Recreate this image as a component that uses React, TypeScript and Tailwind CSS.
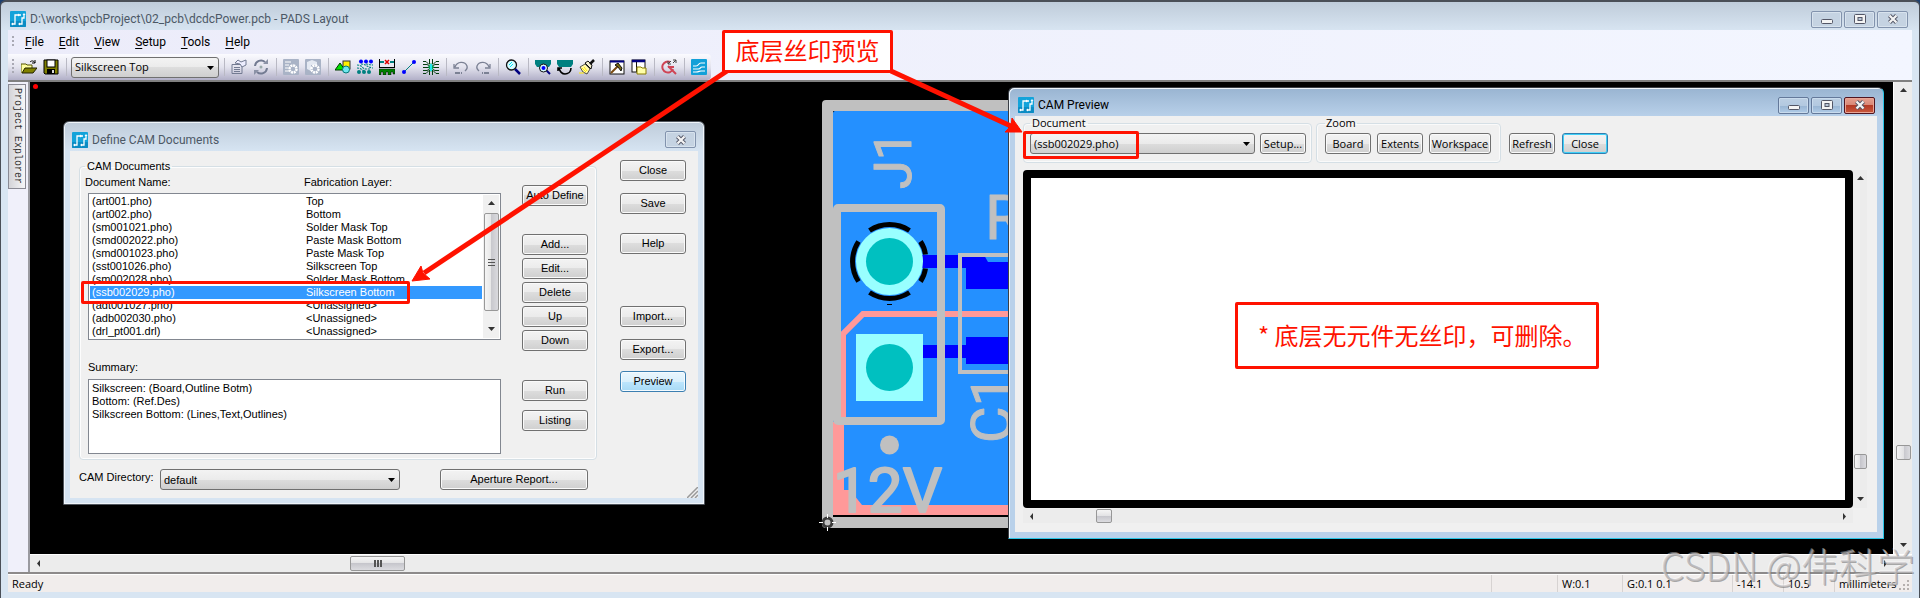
import type { ReactNode } from 'react';
import clsx from 'clsx';

interface CamDocument {
  name: string;
  layer: string;
}

const menus = ['File', 'Edit', 'View', 'Setup', 'Tools', 'Help'];

const documents: CamDocument[] = [
  { name: '(art001.pho)', layer: 'Top' },
  { name: '(art002.pho)', layer: 'Bottom' },
  { name: '(sm001021.pho)', layer: 'Solder Mask Top' },
  { name: '(smd002022.pho)', layer: 'Paste Mask Bottom' },
  { name: '(smd001023.pho)', layer: 'Paste Mask Top' },
  { name: '(sst001026.pho)', layer: 'Silkscreen Top' },
  { name: '(sm002028.pho)', layer: 'Solder Mask Bottom' },
  { name: '(ssb002029.pho)', layer: 'Silkscreen Bottom' },
  { name: '(adt001027.pho)', layer: '<Unassigned>' },
  { name: '(adb002030.pho)', layer: '<Unassigned>' },
  { name: '(drl_pt001.drl)', layer: '<Unassigned>' },
];

const selectedDocument = '(ssb002029.pho)';

const summary = `Silkscreen: (Board,Outline Botm)
Bottom: (Ref.Des)
Silkscreen Bottom: (Lines,Text,Outlines)`;

function Logo() {
  return (
    <svg viewBox="0 0 16 16" className="size-4 shrink-0">
      <rect width="16" height="16" rx="1" fill="#13a3da" />
      <rect y="10" width="16" height="6" rx="1" fill="#0b8cc4" />
      <path d="M2 13h3V4h4M9 13h3V7h2V4" fill="none" stroke="#fff" strokeWidth="1.3" />
      <path d="M1 13l2-1.500v3zM10 4L8 2.500v3zM8 13l2-1.500v3zM14 2l-1.500 2h3z" fill="#fff" />
      <circle cx="10" cy="4" r="1" fill="#fff" />
    </svg>
  );
}

function Button({ children, className, variant = 'normal' }: { children: ReactNode; className?: string; variant?: 'normal' | 'hot' | 'default' }) {
  return (
    <button
      type="button"
      className={clsx(
        'h-[21px] shrink-0 whitespace-nowrap rounded-[3px] border text-center leading-[17px] text-black',
        variant === 'normal' && 'border-[#707070] bg-[linear-gradient(#f3f3f3,#ebebeb_50%,#dddddd_50%,#cfcfcf)] shadow-[inset_0_0_0_1px_#fafafa]',
        variant === 'hot' && 'border-[#3c7fb1] bg-[linear-gradient(#eaf6fd,#d9f0fc_50%,#bee6fd_50%,#a7d9f5)] shadow-[inset_0_0_0_1px_#f4fbff]',
        variant === 'default' && 'border-[#2f7fb0] bg-[linear-gradient(#f3f3f3,#ebebeb_50%,#dddddd_50%,#cfcfcf)] shadow-[inset_0_0_0_1px_#3fd0f8]',
        className,
      )}
    >
      {children}
    </button>
  );
}

function Select({ id, value, className, label }: { id: string; value: string; className?: string; label?: string }) {
  return (
    <div className={clsx('relative h-[21px] shrink-0', className)}>
      <select
        id={id}
        aria-label={label}
        defaultValue={value}
        className="block h-full w-full appearance-none rounded-[3px] border border-[#707070] bg-[linear-gradient(#f3f3f3,#ebebeb_50%,#dddddd_50%,#cfcfcf)] pl-[3px] leading-[18px] text-black"
      >
        <option>{value}</option>
      </select>
      <svg viewBox="0 0 7 4" className="pointer-events-none absolute right-[5px] top-[9px] h-1 w-[7px]">
        <path d="M0 0h7L3.5 4z" fill="#000" />
      </svg>
    </div>
  );
}

function CaptionButton({ kind, tone }: { kind: 'min' | 'max' | 'close'; tone: 'idle' | 'active' | 'red' }) {
  const labels = { min: 'Minimize', max: 'Maximize', close: 'Close window' };
  return (
    <button
      type="button"
      aria-label={labels[kind]}
      className={clsx(
        'flex h-[17px] w-[31px] items-center justify-center rounded-[2px] border',
        tone === 'idle' && 'border-[#8293ad] bg-[#c5d3e2] shadow-[inset_0_0_0_1px_#d8e3ee]',
        tone === 'active' && 'border-[#64799a] bg-[linear-gradient(#bccfe3,#b3c9e0_50%,#98b4d2_50%,#b0cce8)] shadow-[inset_0_0_0_1px_#c9dbed]',
        tone === 'red' && 'border-[#501520] bg-[linear-gradient(#e5a090,#d98877_45%,#b43a25_50%,#c9583d)] shadow-[inset_0_0_0_1px_#e8a596]',
      )}
    >
      <svg viewBox="0 0 12 10" className="h-[10px] w-3">
        {kind === 'min' && <rect x="0.5" y="5.5" width="11" height="4" rx="1" fill="#f4f4f4" stroke="#535666" />}
        {kind === 'max' && (
          <>
            <rect x="0.5" y="0.5" width="11" height="9" rx="1" fill="#f4f4f4" stroke="#535666" />
            <rect x="4" y="3.5" width="4" height="3" fill="#b9c7d8" stroke="#535666" />
          </>
        )}
        {kind === 'close' && (
          <>
            <path d="M2.5 1.5l7 7M9.5 1.5l-7 7" stroke="#535666" strokeWidth="4.2" />
            <path d="M2.5 1.5l7 7M9.5 1.5l-7 7" stroke="#f4f4f4" strokeWidth="2.3" />
          </>
        )}
      </svg>
    </button>
  );
}

function Arrow({ dir }: { dir: 'up' | 'down' | 'left' | 'right' }) {
  const paths = {
    up: 'M1 6l3.500-4L8 6z',
    down: 'M1 2l3.500 4L8 2z',
    left: 'M6 1L3 4.500 6 8z',
    right: 'M3 1l3 3.500L3 8z',
  };
  return (
    <svg viewBox="0 0 9 9" className="size-[9px] shrink-0">
      <path d={paths[dir]} fill="#333" />
    </svg>
  );
}

function Separator() {
  return (
    <div className="flex w-2 shrink-0 justify-center">
      <div className="h-[18px] w-px bg-[#b9b9c4]" />
    </div>
  );
}

function Tool({ label, children }: { label: string; children: ReactNode }) {
  return (
    <button type="button" aria-label={label} className="flex h-[22px] w-[22px] shrink-0 items-center justify-center">
      <svg viewBox="0 0 16 16" className="size-4">{children}</svg>
    </button>
  );
}

function Toolbar() {
  return (
    <div className="flex h-[26px] w-[703px] items-center rounded-r bg-[linear-gradient(#fbfbff,#e3e3ee_50%,#b2b0c8)] pl-1">
      <div className="mr-1 h-4 w-[2px] bg-[repeating-linear-gradient(#a9a9b4_0_2px,transparent_2px_4px)]" />
      <Tool label="Open">
        <path d="M0 14V5h5l1 1h5v3" fill="#ffffa0" stroke="#555500" />
        <path d="M1 14l3-5h12l-4 5z" fill="#808000" stroke="#222200" />
        <path d="M9 3c2-2 4-1 5 1M14 1v3h-3" fill="none" stroke="#000" />
      </Tool>
      <Tool label="Save">
        <path d="M1 1h14v14H2l-1-1z" fill="#808000" stroke="#000" />
        <rect x="4" y="1" width="8" height="7" fill="#fff" stroke="#000" />
        <rect x="4" y="10" width="8" height="5" fill="#000" />
        <rect x="9" y="11" width="2" height="3" fill="#ddd" />
      </Tool>
      <Separator />
      <Select id="layer" label="Layer" value="Silkscreen Top" className="mx-px w-[148px] text-[11px]" />
      <Separator />
      <Tool label="Properties">
        <path d="M1 5.500h10v9H1zM3 8.500h6M3 10.500h6M3 12.500h6" fill="none" stroke="#737b92" />
        <path d="M4 4l3-3 3 2 5-2v5l-4 2-2-3z" fill="#eef" stroke="#737b92" />
      </Tool>
      <Tool label="Cycle">
        <path d="M2 7a6 6 0 0 1 10-4M14 9a6 6 0 0 1-10 4" fill="none" stroke="#737b92" strokeWidth="2" />
        <path d="M10 5h5V0zM6 11H1v5z" fill="#8b92a6" />
        <circle cx="8" cy="8" r="1.500" fill="#9aa" />
      </Tool>
      <Separator />
      <Tool label="Document settings">
        <rect width="16" height="16" rx="1" fill="#a9b3c6" />
        <path d="M2 3h6M2 6h4M2 9h3M2 12h4" stroke="#fff" />
        <circle cx="10" cy="10" r="3.500" fill="none" stroke="#fff" strokeWidth="2.500" strokeDasharray="2 0.700" />
      </Tool>
      <Tool label="Database settings">
        <rect width="16" height="16" rx="1" fill="#a9b3c6" />
        <path d="M2 3l5-2 5 2v3H6v6L2 10z" fill="#e4e9f2" />
        <circle cx="10" cy="10" r="3.500" fill="none" stroke="#fff" strokeWidth="2.500" strokeDasharray="2 0.700" />
      </Tool>
      <Separator />
      <Tool label="Drafting">
        <rect x="8" y="2" width="7" height="8" fill="#ffef00" stroke="#333" />
        <path d="M0 11l5-7 5 7z" fill="#00e000" stroke="#003800" />
        <circle cx="11" cy="10.500" r="3.500" fill="#6fe8f0" stroke="#077" />
      </Tool>
      <Tool label="Design">
        <g fill="none" stroke="#008080" strokeWidth="1.200" strokeDasharray="2 1">
          <path d="M0 6c6 0 5 4 9 4h4" />
          <path d="M0 9c4 0 4 2 8 3" />
          <path d="M4 5c5 0 5 3 12 4" />
          <path d="M9 5c3 0 3 1 7 1" />
        </g>
        <g fill="#0000ff">
          <circle cx="4" cy="2.500" r="2" />
          <circle cx="9" cy="2.500" r="2" />
          <circle cx="14" cy="2.500" r="2" />
        </g>
        <g fill="#008080">
          <circle cx="2" cy="13" r="2" />
          <circle cx="7" cy="13" r="2" />
          <circle cx="12" cy="13" r="2" />
        </g>
      </Tool>
      <Tool label="Dimensioning">
        <rect x="1" y="2" width="14" height="6" fill="#e9e9f2" />
        <path d="M0.500 0v8M15.500 0v8M0 8.500h16" stroke="#000" />
        <path d="M1 3h4M11 3h4" stroke="#008080" strokeWidth="2" />
        <path d="M6 1l4 4M10 1L6 5" stroke="#e00000" strokeWidth="1.500" />
        <path d="M0 10h16v5h-2v-2h-2v3H9v-3H7v3H4v-3H2v3H0z" fill="#008000" stroke="#000" strokeWidth="0.500" />
      </Tool>
      <Tool label="Route">
        <path d="M3 13L13 3" stroke="#008080" />
        <circle cx="3" cy="13" r="2" fill="#0000ff" />
        <circle cx="13" cy="3" r="2" fill="#0000ff" />
      </Tool>
      <Tool label="ECO">
        <path d="M0 2.500h3l3 3M0 5.500h4l2 1M0 8.500h6M0 11.500h4l2-1M0 14.500h3l3-3M16 2.500h-3l-3 3M16 5.500h-4l-2 1M16 8.500h-6M16 11.500h-4l-2-1M16 14.500h-3l-3-3M6.500 0v5M9.500 0v5M6.500 16v-5M9.500 16v-5" fill="none" stroke="#053d10" />
        <path d="M8 4l3 4-3 5-3-5z" fill="#00a050" />
        <path d="M8 5v7" stroke="#20e8f0" strokeWidth="2" />
      </Tool>
      <Separator />
      <Tool label="Undo">
        <path d="M2 8c2-6 10-6 12-1 1 3-1 4-2 5M1 5v4h5" fill="none" stroke="#7b8194" strokeWidth="1.300" />
        <path d="M2 14h8" stroke="#7b8194" strokeWidth="2" strokeDasharray="5 1 1 1" />
      </Tool>
      <Tool label="Redo">
        <path d="M14 8c-2-6-10-6-12-1-1 3 1 4 2 5M15 5v4h-5" fill="none" stroke="#7b8194" strokeWidth="1.300" />
        <path d="M14 14H6" stroke="#7b8194" strokeWidth="2" strokeDasharray="5 1 1 1" />
      </Tool>
      <Separator />
      <Tool label="Zoom">
        <path d="M10 10l5 5" stroke="#000080" strokeWidth="2.500" />
        <circle cx="6.500" cy="6" r="5" fill="#d6fbff" stroke="#111" strokeWidth="1.300" />
        <path d="M4 6l3-3M5 8l3-3" stroke="#00e0f0" />
      </Tool>
      <Separator />
      <Tool label="Board view">
        <path d="M0 1h16v4l-2 3H2L0 5z" fill="#008080" />
        <path d="M11 11l4 4" stroke="#000080" strokeWidth="2" />
        <circle cx="8.500" cy="9" r="4" fill="#d8faff" stroke="#111" />
        <circle cx="8.500" cy="9" r="2" fill="#0000ff" />
      </Tool>
      <Tool label="Refresh view">
        <path d="M0 1h16v4l-2 3H2L0 5z" fill="#008080" />
        <path d="M2 9c1 4 3 6 6 6s6-2 6-6M1 12V9h4" fill="none" stroke="#000" strokeWidth="1.600" />
      </Tool>
      <Tool label="Redraw">
        <path d="M1 8l5-3 5 5-3 5-4-2z" fill="#fff7a8" stroke="#111" strokeWidth="0.700" />
        <path d="M6 4l6 6 1-4-4-4z" fill="#f4f0d0" stroke="#111" />
        <path d="M11 5l4-4" stroke="#111" strokeWidth="2.500" />
        <path d="M3 9l4 4M5 8l3 4M0 14h5" stroke="#ffe800" />
      </Tool>
      <Separator />
      <Tool label="Output window">
        <rect x="1" y="2" width="14" height="13" fill="#fff" stroke="#111" />
        <path d="M1 2.500h14" stroke="#000080" strokeWidth="2" />
        <path d="M2 14l7-7" stroke="#7a4a10" strokeWidth="2" />
        <path d="M6 6l3-2 4 5-1 3-3-4z" fill="#7a6a10" stroke="#111" />
      </Tool>
      <Tool label="Project window">
        <rect x="1" y="1" width="13" height="12" fill="#fff" stroke="#111" />
        <path d="M1 2h13" stroke="#000080" strokeWidth="2.500" />
        <path d="M5.500 3v10" stroke="#111" />
        <path d="M6 15V8h4l1 1h4v6z" fill="#ffffa8" stroke="#887a00" />
      </Tool>
      <Separator />
      <Tool label="Quick find">
        <path d="M9 3a5.500 5.500 0 1 0 3 7M7 8h6" fill="none" stroke="#cf4455" strokeWidth="2" />
        <path d="M7 7l8 8" stroke="#cf4455" strokeWidth="2" />
        <path d="M7 5l3-3M12 4l3-3M12 1h3v3M7 2v3h3" fill="none" stroke="#444" />
      </Tool>
      <Separator />
      <Tool label="Router">
        <rect width="16" height="16" rx="1" fill="#12a0d8" />
        <path d="M2 7h3c3 0 2-3 5-3h4M2 10h5c3 0 2-2 4-2h3M2 13h3c3 0 3-1 5-1h4" fill="none" stroke="#fff" strokeWidth="1.200" />
      </Tool>
    </div>
  );
}

/* board artwork in the lower layer of the work area */
function Board() {
  return (
    <svg viewBox="815 95 194 440" className="absolute left-[785px] top-[13px] h-[440px] w-[194px]">
      <rect x="822" y="100" width="200" height="428" rx="4" fill="#c0c0c0" />
      <rect x="833" y="111" width="190" height="406" fill="#000" />
      <rect x="833" y="111" width="190" height="404" rx="2" fill="#2490ff" />
      <path d="M833 422h11v68h6l12 15h160v10H833z" fill="#ff9999" />
      <path d="M1009 314H863l-20 20v88" fill="none" stroke="#ff9999" strokeWidth="6" />
      <path d="M920 255h64l4 7h30v27h-52v-21h-46zM920 345h46v-8h60v27h-60v-6h-46z" fill="#0000ff" />
      <rect x="837" y="208" width="104" height="213" rx="1" fill="none" stroke="#c0c0c0" strokeWidth="8" />
      <path d="M1012 255H960v117h52" fill="none" stroke="#c0c0c0" strokeWidth="4" />

      <g fill="none" stroke="#000" strokeWidth="5">
        <path d="M869.500 230.500a36.500 36.500 0 0 1 40 0" />
        <path d="M869.500 292.500a36.500 36.500 0 0 0 40 0" />
        <path d="M858.500 241.500a36.500 36.500 0 0 0 0 40" />
        <path d="M920.500 241.500q4 6 5 13M920.500 281.500q4-6 5-13" />
      </g>
      <circle cx="889.500" cy="261.500" r="33.500" fill="#99ffff" />
      <circle cx="889.500" cy="261.500" r="23.500" fill="#00c0c0" />
      <rect x="856" y="334" width="67" height="67" fill="#99ffff" />
      <circle cx="889.500" cy="367.500" r="23.500" fill="#00c0c0" />
      <circle cx="889.500" cy="445" r="9.500" fill="#c0c0c0" />
      <path d="M887 304.500h5" stroke="#000" />

      <g fill="#c0c0c0" stroke="#c0c0c0" strokeLinejoin="round" fontFamily="Roboto, 'Liberation Sans', sans-serif">
        <text transform="translate(911 189) rotate(-90)" fontSize="52">J1</text>
        <text x="985" y="239" fontSize="62">R</text>
        <text transform="translate(1011 443) rotate(-90)" fontSize="56">C1</text>
        <text x="833" y="512" fontSize="62" strokeWidth="2">12V</text>
      </g>

      <circle cx="827.500" cy="522.500" r="4.500" fill="#c0c0c0" stroke="#3a3a3a" strokeWidth="3" />
      <path d="M819 522.500h4M832 522.500h4M827.500 514v4M827.500 527v4" stroke="#fff" />
    </svg>
  );
}

function DefineDialog() {
  return (
    <section className="absolute left-[33px] top-[39px] flex w-[642px] flex-col rounded-t-md border border-[#50565e] bg-[linear-gradient(#bfccda,#d6e4f2_29px)] px-[6px] pb-[6px] font-['Liberation_Sans',Arial,sans-serif] text-[11px] leading-[13px] shadow-[inset_0_0_0_1px_#f0f5fa]">
      <header className="flex h-[29px] items-center pl-[2px] pt-[6px] pr-[2px] font-[Roboto,'Open_Sans',sans-serif] text-xs text-[#4c5866]">
        <Logo />
        <h2 className="ml-1 flex-1">Define CAM Documents</h2>
        <CaptionButton kind="close" tone="idle" />
      </header>
      <div className="relative bg-[#f0f0f0] pb-2 pl-[9px] pr-3 pt-[9px] text-black">
        <div className="flex items-start justify-between">
          <fieldset className="flex rounded border border-[#d5dfe5] pb-[5px] pl-[5px] pr-2 shadow-[inset_0_0_0_1px_#fdfdfd]">
            <legend className="px-[2px]">CAM Documents</legend>
            <div className="pt-[3px]">
              <table className="block">
                <thead className="mb-1 block">
                  <tr className="flex text-left">
                    <th className="w-[219px] font-normal">Document Name:</th>
                    <th className="font-normal">Fabrication Layer:</th>
                  </tr>
                </thead>
                <tbody className="relative ml-[3px] block h-[147px] w-[413px] border border-[#828790] bg-white py-px pl-px pr-[18px]">
                  {documents.map((doc) => (
                    <tr
                      key={doc.name}
                      className={clsx('flex pl-[2px]', doc.name === selectedDocument && 'bg-[#3399ff] text-white')}
                    >
                      <td className="w-[214px]">{doc.name}</td>
                      <td>{doc.layer}</td>
                    </tr>
                  ))}
                  <tr className="absolute bottom-px right-px top-px w-4">
                    <td className="flex h-full w-4 flex-col items-center bg-[#f0f0f0] py-1" aria-label="Scroll">
                      <Arrow dir="up" />
                      <div className="mb-auto mt-[5px] flex h-[98px] w-[15px] items-center justify-center rounded-[2px] border border-[#989898] bg-[linear-gradient(90deg,#f5f5f5,#e6e6e6_50%,#c9c9ce_50%,#dadade)]">
                        <div className="h-[7px] w-[7px] bg-[repeating-linear-gradient(#555_0_1px,transparent_1px_3px)]" />
                      </div>
                      <Arrow dir="down" />
                    </td>
                  </tr>
                </tbody>
              </table>
              <label htmlFor="summary" className="ml-[3px] mt-[21px] block">Summary:</label>
              <textarea
                id="summary"
                readOnly
                defaultValue={summary}
                className="ml-[3px] mt-[5px] block h-[75px] w-[413px] resize-none overflow-hidden border border-[#828790] bg-white px-[3px] py-[2px]"
              />
            </div>
            <div className="ml-[21px] mt-3 flex w-[66px] flex-col gap-[3px]">
              <Button>Auto Define</Button>
              <Button className="mt-[25px]">Add...</Button>
              <Button>Edit...</Button>
              <Button>Delete</Button>
              <Button>Up</Button>
              <Button>Down</Button>
              <Button className="mt-[26px]">Run</Button>
              <Button className="mt-[6px]">Listing</Button>
            </div>
          </fieldset>
          <div className="flex w-[66px] flex-col gap-3">
            <Button>Close</Button>
            <Button>Save</Button>
            <Button className="mt-[7px]">Help</Button>
            <Button className="mt-10">Import...</Button>
            <Button>Export...</Button>
            <Button variant="hot" className="-mt-px">Preview</Button>
          </div>
        </div>
        <div className="mt-[9px] flex items-center">
          <label htmlFor="directory" className="w-[81px] pb-1">CAM Directory:</label>
          <Select id="directory" value="default" className="w-60" />
          <Button className="ml-10 w-[148px]">Aperture Report...</Button>
        </div>
        <svg viewBox="0 0 11 11" className="absolute bottom-0 right-0 size-[11px]">
          <path d="M0 11L11 0M4 11l7-7M8 11l3-3" stroke="#999" strokeWidth="1.500" />
        </svg>
      </div>
    </section>
  );
}

function PreviewWindow() {
  return (
    <section className="absolute left-[978px] top-[5px] flex w-[876px] flex-col rounded-t-md border border-b-[#29c5e6] border-l-[#3b3f46] border-r-[#29c5e6] border-t-[#3b3f46] bg-[linear-gradient(#99b4d1,#b9d1ea_29px)] px-[6px] pb-[6px] font-['Open_Sans','Noto_Sans',sans-serif] text-[11px] leading-[14px] text-black shadow-[inset_1px_1px_0_#eef5fb]">
      <header className="flex h-7 items-center gap-[2px] pl-[3px] pr-[2px] pt-[6px] font-[Roboto,'Open_Sans',sans-serif] text-xs">
        <Logo />
        <h2 className="ml-[2px] flex-1">CAM Preview</h2>
        <CaptionButton kind="min" tone="active" />
        <CaptionButton kind="max" tone="active" />
        <CaptionButton kind="close" tone="red" />
      </header>
      <div className="bg-[#f0f0f0] pb-[9px] pl-2 pr-[10px]">
        <div className="flex items-start">
          <fieldset className="flex w-[289px] rounded border border-[#d5dfe5] pb-2 pl-[6px] pt-[3px] shadow-[inset_0_0_0_1px_#fafafa]">
            <legend className="px-[2px]">Document</legend>
            <Select id="document" label="Document" value={selectedDocument} className="w-[225px]" />
            <Button className="ml-[5px] w-[46px]">Setup...</Button>
          </fieldset>
          <fieldset className="ml-1 flex w-[185px] gap-[6px] rounded border border-[#d5dfe5] pb-2 pl-[8px] pt-[3px] shadow-[inset_0_0_0_1px_#fafafa]">
            <legend className="px-px">Zoom</legend>
            <Button className="w-[46px]">Board</Button>
            <Button className="w-[46px]">Extents</Button>
            <Button className="w-[62px]">Workspace</Button>
          </fieldset>
          <div className="ml-2 flex gap-[7px] pt-[17px]">
            <Button className="w-[46px]">Refresh</Button>
            <Button variant="default" className="w-[46px]">Close</Button>
          </div>
        </div>
        <div className="mt-[7px] flex">
          <div className="h-[338px] flex-1 rounded border-8 border-black bg-white" />
          <div className="flex w-[14px] flex-col items-center bg-[#ececec] py-1">
            <Arrow dir="up" />
            <div className="mb-[26px] mt-auto h-[15px] w-[13px] rounded-[2px] border border-[#979797] bg-[linear-gradient(90deg,#f5f5f5,#e2e2e4_50%,#c6c6cc_50%,#dcdce0)]" />
            <Arrow dir="down" />
          </div>
        </div>
        <div className="mr-[14px] mt-px flex h-[14px] items-center bg-[#ececec] px-1">
          <Arrow dir="left" />
          <div className="ml-[60px] mr-auto h-[14px] w-4 rounded-[2px] border border-[#979797] bg-[linear-gradient(#f5f5f5,#e2e2e4_50%,#c6c6cc_50%,#dcdce0)]" />
          <Arrow dir="right" />
        </div>
      </div>
    </section>
  );
}

function StatusBar() {
  return (
    <footer className="flex h-[18px] items-center border-t border-white bg-[#f1edec] pl-1 text-[11px] leading-[17px] text-black">
      <span className="flex-1">Ready</span>
      <span className="h-full w-[66px] border-l border-[#d7d3d2]" />
      <span className="w-[65px] border-l border-[#d7d3d2] pl-1">W:0.1</span>
      <span className="w-[110px] border-l border-[#d7d3d2] pl-1">G:0.1 0.1</span>
      <span className="w-[51px] border-l border-[#d7d3d2] pl-1">-14.1</span>
      <span className="w-[51px] border-l border-[#d7d3d2] pl-1">10.5</span>
      <span className="w-[62px] border-l border-[#d7d3d2] pl-1">millimeters</span>
      <svg viewBox="0 0 16 16" className="size-4">
        <path d="M11 5h2M7 9h2M11 9h2M3 13h2M7 13h2M11 13h2" stroke="#b5b0ae" strokeWidth="2" />
      </svg>
    </footer>
  );
}

function Annotations() {
  return (
    <div className="pointer-events-none absolute inset-0 font-['Noto_Sans_CJK_SC',sans-serif] text-2xl text-[#ff1200]">
      <svg viewBox="0 0 1920 598" className="absolute left-0 top-0 h-[598px] w-[1920px]">
        <g fill="#ff1200" stroke="#ff1200">
          <path d="M727 71L424 273" strokeWidth="5" />
          <path d="M412 281l9-15 2 7 7 6z" />
          <path d="M891 71l122 56" strokeWidth="5" />
          <path d="M1022 132l-10-14-1 8-6 6z" />
        </g>
      </svg>
      <div className="absolute left-[722px] top-[30px] flex h-[43px] w-[171px] items-center justify-center rounded-[2px] border-[3px] border-[#ff1200] bg-white pb-1 leading-8">
        底层丝印预览
      </div>
      <div className="absolute left-[81px] top-[281px] h-[23px] w-[329px] rounded-[2px] border-[3px] border-[#ff1200]" />
      <div className="absolute left-[1023px] top-[131px] h-[28px] w-[116px] rounded-[2px] border-[3px] border-[#ff1200]" />
      <div className="absolute left-[1235px] top-[302px] flex h-[67px] w-[364px] items-center whitespace-nowrap rounded-[2px] border-[3px] border-[#ff1200] bg-white pb-[2px] pl-5 leading-8">
        * 底层无元件无丝印，可删除。
      </div>
      <div className="absolute bottom-[13px] right-[5px] whitespace-nowrap text-[38px] font-light leading-10 text-[#c4c1c3]/70 [text-shadow:1px_1px_0_#77777799,-1px_-1px_0_#ffffff66]">
        CSDN @伟科学
      </div>
    </div>
  );
}

export default function App() {
  return (
    <div className="relative overflow-hidden bg-[#1d3f6e]">
      <main className="flex min-h-screen flex-col overflow-hidden rounded-t-md border-x border-t-2 border-[#4a4f57] bg-[linear-gradient(#bfccda,#d8e5f2_29px)] px-[7px] pb-[6px] font-['Open_Sans','Noto_Sans',sans-serif] text-xs text-black">
        <header className="flex h-7 items-center gap-[2px] pl-[2px] pr-1 pt-[6px] font-[Roboto,'Open_Sans',sans-serif] text-[#4c5866]">
          <Logo />
          <h1 className="ml-[2px] flex-1">D:\works\pcbProject\02_pcb\dcdcPower.pcb - PADS Layout</h1>
          <CaptionButton kind="min" tone="idle" />
          <CaptionButton kind="max" tone="idle" />
          <CaptionButton kind="close" tone="idle" />
        </header>

        <div className="bg-[linear-gradient(90deg,#ececfa,#f3f6ff)]">
          <nav className="flex h-6 items-center gap-[15px] pl-1 font-[Roboto,'Open_Sans',sans-serif]">
            <div className="-mr-1 h-3 w-[2px] bg-[repeating-linear-gradient(#a9a9b4_0_2px,transparent_2px_4px)]" />
            {menus.map((menu) => (
              <button key={menu} type="button">
                <span className="underline underline-offset-2">{menu[0]}</span>
                {menu.slice(1)}
              </button>
            ))}
          </nav>
          <Toolbar />
        </div>

        <div className="flex flex-1 border-t-2 border-[#808080]">
          <aside className="w-[22px] border-r-2 border-[#9a9aa0] bg-[#f0f0fa] pt-[2px]">
            <button
              type="button"
              className="h-[105px] w-[18px] border border-[#8a8a94] bg-[linear-gradient(90deg,#d4d4d8,#f6f6f8)] font-['Liberation_Mono',monospace] text-[10px] leading-4 text-[#333] [writing-mode:vertical-rl]"
            >
              Project Explorer
            </button>
          </aside>
          <div className="flex flex-1 flex-col">
            <div className="flex flex-1">
              <div className="relative flex-1 bg-black">
                <span className="absolute left-[3px] top-[2px] size-[5px] rounded-full bg-[#ff0000]" />
                <Board />
                <DefineDialog />
                <PreviewWindow />
              </div>
              <div className="flex w-[19px] flex-col items-center border-l border-white bg-[#ececec] py-1">
                <Arrow dir="up" />
                <div className="mb-[81px] mt-auto h-[15px] w-[15px] rounded-[2px] border border-[#979797] bg-[linear-gradient(90deg,#f5f5f5,#e2e2e4_50%,#c6c6cc_50%,#dcdce0)]" />
                <Arrow dir="down" />
              </div>
            </div>
            <div className="flex h-[18px] items-center border-t border-white bg-[#ececec] pl-1 pr-[22px]">
              <Arrow dir="left" />
              <div className="ml-[307px] mr-auto flex h-[15px] w-[55px] items-center justify-center rounded-[2px] border border-[#979797] bg-[linear-gradient(#f5f5f5,#e2e2e4_50%,#c6c6cc_50%,#dcdce0)]">
                <div className="h-[7px] w-[8px] bg-[repeating-linear-gradient(90deg,#555_0_2px,transparent_2px_3px)]" />
              </div>
              <Arrow dir="right" />
            </div>
          </div>
        </div>
        <div className="h-[2px] bg-[#8d8a8a]" />
        <StatusBar />
      </main>
      <Annotations />
    </div>
  );
}
